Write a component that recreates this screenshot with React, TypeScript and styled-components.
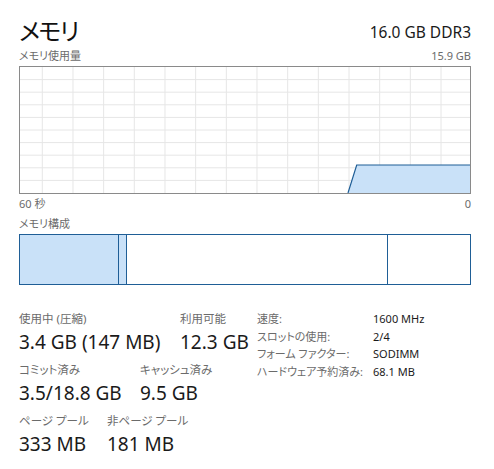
import React from 'react';
import styled, { createGlobalStyle } from 'styled-components';

const GlobalStyle = createGlobalStyle`
    html, body {
        margin: 0;
        padding: 0;
        background: #ffffff;
    }
    body {
        font-family: 'Noto Sans', 'Noto Sans CJK JP', sans-serif;
        font-feature-settings: 'palt';
        color: #1a1a1a;
    }
`;

const Page = styled.div`
    width: 494px;
    height: 469px;
    box-sizing: border-box;
    padding: 4px 23px 0 19px;
    overflow: hidden;
`;

const Header = styled.div`
    display: flex;
    justify-content: space-between;
    align-items: flex-end;
    height: 42px;
`;

const Title = styled.div`
    font-size: 24px;
    line-height: 31px;
    letter-spacing: -1.5px;
    color: #111111;
`;

const Spec = styled.div`
    font-size: 15.5px;
    line-height: 27px;
`;

const CaptionRow = styled.div`
    display: flex;
    justify-content: space-between;
    font-size: 11px;
    line-height: 20px;
    height: 20px;
    color: #6b6b6b;
`;

const Graph = styled.div`
    width: 452px;
    height: 128px;
    box-sizing: border-box;
    border: 1px solid #8a8a8a;
    background: #ffffff;
`;

const Composition = styled.div`
    display: flex;
    width: 452px;
    height: 51px;
    box-sizing: border-box;
    border: 1px solid #1f5e96;
`;

interface ISegmentProps {
    filled?: boolean;
    first?: boolean;
    grow?: boolean;
}

const Segment = styled.div<ISegmentProps>`
    box-sizing: border-box;
    height: 100%;
    flex-grow: ${(p) => (p.grow ? 1 : 0)};
    background: ${(p) => (p.filled ? '#c9e1f8' : '#ffffff')};
    border-left: ${(p) => (p.first ? 'none' : '1px solid #1f5e96')};
`;

const Bottom = styled.div`
    display: flex;
    margin-top: 25px;
`;

const Stats = styled.div`
    width: 238px;
    display: flex;
    flex-direction: column;
`;

const StatRow = styled.div`
    display: flex;
    height: 51px;
`;

const Stat = styled.div<{ w?: number }>`
    width: ${(p) => (p.w ? `${p.w}px` : 'auto')};
    flex-shrink: 0;
    display: flex;
    flex-direction: column;
`;

const StatLabel = styled.div`
    font-size: 11.5px;
    line-height: 18px;
    color: #6b6b6b;
`;

const StatValue = styled.div`
    font-size: 19px;
    line-height: 28px;
    color: #1a1a1a;
`;

const Props = styled.div`
    display: grid;
    grid-template-columns: 116px auto;
    grid-auto-rows: 17.7px;
    font-size: 11px;
    line-height: 17.7px;
`;

const PropLabel = styled.div`
    color: #6b6b6b;
`;

const PropValue = styled.div`
    color: #1a1a1a;
`;

const UsageChart: React.FC = () => {
    const w = 450;
    const h = 126;
    const vx: number[] = [];
    for (let i = 0; i < 14; i++) vx.push(22.3 + i * 30.67);
    const hy: number[] = [];
    for (let i = 1; i < 10; i++) hy.push((h / 10) * i);
    return (
        <svg width={w} height={h} viewBox={`0 0 ${w} ${h}`} style={{ display: 'block' }}>
            {vx.map((x) => (
                <line key={'v' + x} x1={x} y1={0} x2={x} y2={h} stroke="#e6e6e6" strokeWidth={1} />
            ))}
            {hy.map((y) => (
                <line key={'h' + y} x1={0} y1={y} x2={w} y2={y} stroke="#e6e6e6" strokeWidth={1} />
            ))}
            <polygon points={`328,${h} 336.7,98 ${w},98 ${w},${h}`} fill="#c9e1f8" />
            <polyline points={`328,${h} 336.7,98 ${w},98`} fill="none" stroke="#1f5e96" strokeWidth={1.2} />
        </svg>
    );
};

const segments = [
    { width: 98, filled: true },
    { width: 8, filled: true },
    { width: 261, filled: false },
    { width: 85, filled: false },
];

const App: React.FC = () => {
    return (
        <>
            <GlobalStyle />
            <Page>
                <Header>
                    <Title>メモリ</Title>
                    <Spec>16.0 GB DDR3</Spec>
                </Header>
                <CaptionRow>
                    <span>メモリ使用量</span>
                    <span>15.9 GB</span>
                </CaptionRow>
                <Graph>
                    <UsageChart />
                </Graph>
                <CaptionRow>
                    <span>60 秒</span>
                    <span>0</span>
                </CaptionRow>
                <CaptionRow>
                    <span>メモリ構成</span>
                </CaptionRow>
                <Composition>
                    {segments.map((s, i) => {
                        const last = i === segments.length - 1;
                        return (
                            <Segment
                                key={i}
                                first={i === 0}
                                grow={last}
                                filled={s.filled}
                                style={last ? undefined : { width: s.width }}
                            />
                        );
                    })}
                </Composition>
                <Bottom>
                    <Stats>
                        <StatRow>
                            <Stat w={161}>
                                <StatLabel>使用中 (圧縮)</StatLabel>
                                <StatValue>3.4 GB (147 MB)</StatValue>
                            </Stat>
                            <Stat>
                                <StatLabel>利用可能</StatLabel>
                                <StatValue>12.3 GB</StatValue>
                            </Stat>
                        </StatRow>
                        <StatRow>
                            <Stat w={121}>
                                <StatLabel>コミット済み</StatLabel>
                                <StatValue>3.5/18.8 GB</StatValue>
                            </Stat>
                            <Stat>
                                <StatLabel>キャッシュ済み</StatLabel>
                                <StatValue>9.5 GB</StatValue>
                            </Stat>
                        </StatRow>
                        <StatRow>
                            <Stat w={88}>
                                <StatLabel>ページ プール</StatLabel>
                                <StatValue>333 MB</StatValue>
                            </Stat>
                            <Stat>
                                <StatLabel>非ページ プール</StatLabel>
                                <StatValue>181 MB</StatValue>
                            </Stat>
                        </StatRow>
                    </Stats>
                    <Props>
                        <PropLabel>速度:</PropLabel>
                        <PropValue>1600 MHz</PropValue>
                        <PropLabel>スロットの使用:</PropLabel>
                        <PropValue>2/4</PropValue>
                        <PropLabel>フォーム ファクター:</PropLabel>
                        <PropValue>SODIMM</PropValue>
                        <PropLabel>ハードウェア予約済み:</PropLabel>
                        <PropValue>68.1 MB</PropValue>
                    </Props>
                </Bottom>
            </Page>
        </>
    );
};

export default App;
